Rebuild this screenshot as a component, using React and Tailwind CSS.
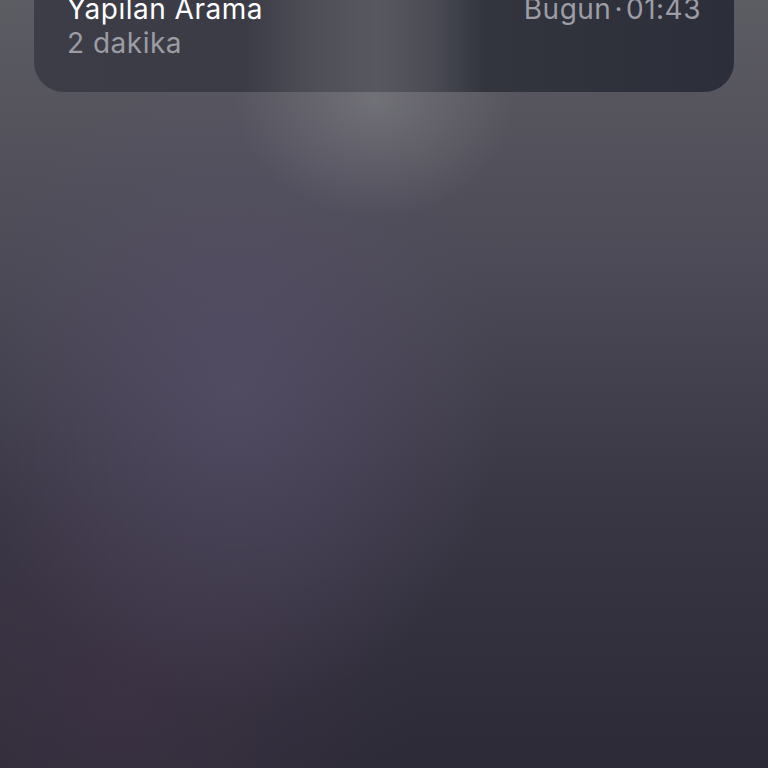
import React from 'react';

const App = () => {
  return (
    <div className="relative h-[768px] w-full overflow-hidden bg-[radial-gradient(ellipse_140px_120px_at_375px_98px,rgba(150,150,155,0.42)_0%,rgba(150,150,155,0)_100%),radial-gradient(ellipse_270px_320px_at_235px_390px,rgba(88,80,108,0.7)_0%,rgba(88,80,108,0)_100%),radial-gradient(ellipse_300px_300px_at_120px_700px,rgba(70,55,75,0.5)_0%,rgba(70,55,75,0)_100%),linear-gradient(180deg,#5c5c63_0%,#4c4a56_35%,#3a3745_65%,#2c2a37_100%)] font-['Inter','Noto_Sans',sans-serif]">
      <div className="mx-[34px] -mt-[27px] rounded-[30px] bg-[linear-gradient(90deg,rgba(255,255,255,0)_210px,rgba(255,255,255,0.1)_280px,rgba(255,255,255,0.16)_345px,rgba(255,255,255,0.1)_400px,rgba(255,255,255,0)_450px),linear-gradient(90deg,#3c3d46_0%,#3a3b44_40%,#30323c_75%,#2c2e39_100%)] px-[33px] pt-[19px] pb-[32px]">
        <div className="flex items-start justify-between text-[28px] leading-[34px] tracking-[0.5px]">
          <div>
            <p className="text-white">Yapılan Arama</p>
            <p className="text-[#9c9ca3]">2 dakika</p>
          </div>
          <p className="text-[#9c9da5]">Bugun<span className="px-[3px]">·</span>01:43</p>
        </div>
      </div>
    </div>
  );
};

export default App;
